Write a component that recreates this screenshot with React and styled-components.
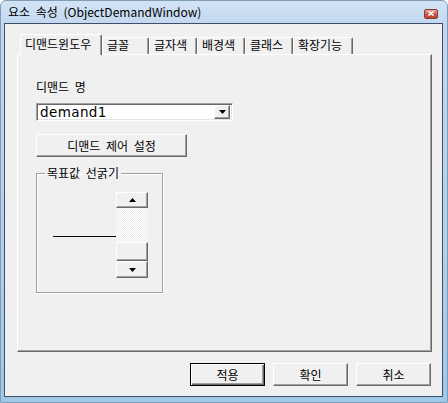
import React from "react";
import styled, { createGlobalStyle } from "styled-components";

const GlobalStyle = createGlobalStyle`
  html, body { margin: 0; padding: 0; }
  body {
    font-family: "Noto Sans CJK KR", "Noto Sans", sans-serif;
    font-size: 12px;
    word-spacing: 3px;
    color: #000;
  }
`;

const Window = styled.div`
  box-sizing: border-box;
  width: 448px;
  height: 403px;
  display: flex;
  flex-direction: column;
  padding: 0 4px 5px 3px;
  border: 1px solid #7f9db9;
  border-radius: 6px 6px 0 0;
  background: linear-gradient(to bottom, #d3e3f4 0, #c3d8ef 22px, #b5cfea 60%, #9fc8e8 100%);
`;

const TitleBar = styled.div`
  height: 22px;
  display: flex;
  align-items: center;
  padding-left: 4px;
`;

const Title = styled.span`
  flex: 1;
  line-height: 14px;
  color: #000;
`;

const CloseBox = styled.div`
  width: 14px;
  height: 10px;
  margin: 3px 5px 0 0;
  box-sizing: border-box;
  border: 1px solid #8a3a30;
  border-radius: 2px;
  background: linear-gradient(to bottom, #e8a79c, #c9594b 55%, #b8402f);
  display: flex;
  align-items: center;
  justify-content: center;
`;

const Client = styled.div`
  flex: 1;
  display: flex;
  flex-direction: column;
  background: #f0f0f0;
  border: 1px solid #3c4f66;
  padding: 10px 10px 10px 12px;
`;

const TabStrip = styled.div`
  height: 20px;
  display: flex;
  align-items: flex-end;
  padding-left: 3px;
`;

const Tab = styled.div`
  box-sizing: border-box;
  width: ${(p) => p.$w}px;
  height: ${(p) => (p.$active ? 21 : 17)}px;
  padding: ${(p) => (p.$active ? "2px 0 0 4px" : "0 0 0 4px")};
  line-height: 14px;
  white-space: nowrap;
  background: #f0f0f0;
  border-top: 1px solid #fff;
  border-left: 1px solid #fff;
  border-right: 1px solid #696969;
  border-radius: 2px 2px 0 0;
  box-shadow: inset -1px 0 #a0a0a0;
  position: ${(p) => (p.$active ? "relative" : "static")};
  z-index: ${(p) => (p.$active ? 1 : "auto")};
  margin-bottom: ${(p) => (p.$active ? "-1px" : "0")};
`;

const Panel = styled.div`
  box-sizing: border-box;
  height: 298px;
  flex: none;
  display: flex;
  flex-direction: column;
  align-items: flex-start;
  border: 1px solid;
  border-color: #fff #696969 #696969 #fff;
  box-shadow: inset -1px -1px #a0a0a0;
  padding: 25px 0 0 18px;
`;

const Label = styled.div`
  line-height: 14px;
`;

const Combo = styled.div`
  box-sizing: border-box;
  margin-top: 9px;
  width: 197px;
  height: 18px;
  display: flex;
  align-items: center;
  padding: 2px;
  background: #fff;
  border: 1px solid;
  border-color: #a0a0a0 #fff #fff #a0a0a0;
  box-shadow: inset 1px 1px #696969, inset -1px -1px #e3e3e3;
`;

const ComboText = styled.span`
  flex: 1;
  padding-left: 1px;
  font-family: "DejaVu Sans", "Liberation Sans", sans-serif;
  font-size: 13.5px;
  letter-spacing: 0.4px;
  line-height: 14px;
`;

const Raised = styled.div`
  box-sizing: border-box;
  background: #f0f0f0;
  border: 1px solid;
  border-color: #fff #696969 #696969 #fff;
  box-shadow: inset -1px -1px #a0a0a0;
  display: flex;
  align-items: center;
  justify-content: center;
`;

const DropButton = styled(Raised)`
  width: 16px;
  height: 14px;
`;

const Button = styled(Raised)`
  width: ${(p) => p.$w}px;
  height: 23px;
  line-height: 14px;
  ${(p) =>
    p.$default &&
    `
    border: 1px solid #000;
    box-shadow: inset 1px 1px #fff, inset -1px -1px #696969, inset -2px -2px #a0a0a0;
  `}
`;

const SetupButton = styled(Button)`
  margin-top: 13px;
`;

const Group = styled.fieldset`
  box-sizing: border-box;
  margin: 9px 0 0 0;
  width: 127px;
  min-width: 0;
  padding: 12px 0 14px 8px;
  border: 1px solid #a0a0a0;
  box-shadow: inset 1px 1px #fff, 1px 1px #fff;
`;

const Legend = styled.legend`
  padding: 0 2px;
  line-height: 14px;
`;

const Row = styled.div`
  display: flex;
  align-items: center;
  padding-left: 8px;
`;

const LineSample = styled.div`
  width: 63px;
  height: 1px;
  margin-top: 2px;
  background: #000;
`;

const ScrollBar = styled.div`
  width: 32px;
  display: flex;
  flex-direction: column;
`;

const ScrollButton = styled(Raised)`
  height: ${(p) => p.$h}px;
`;

const Track = styled.div`
  height: 34px;
  background: repeating-conic-gradient(#ffffff 0 25%, #ebebeb 0 50%) 0 0 / 2px 2px;
`;

const Footer = styled.div`
  margin-top: 11px;
  display: flex;
  justify-content: flex-end;
  gap: 8px;
  padding-right: 1px;
`;

const Arrow = ({ up }) => (
  <svg width="7" height="4" viewBox="0 0 7 4">
    <path d={up ? "M0 4 L3.5 0 L7 4 Z" : "M0 0 L7 0 L3.5 4 Z"} fill="#000" />
  </svg>
);

const tabs = [
  { label: "디맨드윈도우", w: 82, active: true },
  { label: "글꼴", w: 47 },
  { label: "글자색", w: 48 },
  { label: "배경색", w: 48 },
  { label: "클래스", w: 48 },
  { label: "확장기능", w: 60 },
];

export default function App() {
  return (
    <>
      <GlobalStyle />
      <Window>
        <TitleBar>
          <Title>요소 속성 (ObjectDemandWindow)</Title>
          <CloseBox>
            <svg width="6" height="5" viewBox="0 0 6 5">
              <path d="M0.5 0.5 L5.5 4.5 M5.5 0.5 L0.5 4.5" stroke="#fff" strokeWidth="1.6" />
            </svg>
          </CloseBox>
        </TitleBar>
        <Client>
          <TabStrip>
            {tabs.map((t) => (
              <Tab key={t.label} $w={t.w} $active={t.active}>
                {t.label}
              </Tab>
            ))}
          </TabStrip>
          <Panel>
            <Label>디맨드 명</Label>
            <Combo>
              <ComboText>demand1</ComboText>
              <DropButton>
                <Arrow />
              </DropButton>
            </Combo>
            <SetupButton $w={151}>디맨드 제어 설정</SetupButton>
            <Group>
              <Legend>목표값 선굵기</Legend>
              <Row>
                <LineSample />
                <ScrollBar>
                  <ScrollButton $h={16}>
                    <Arrow up />
                  </ScrollButton>
                  <Track />
                  <ScrollButton $h={19} />
                  <ScrollButton $h={17}>
                    <Arrow />
                  </ScrollButton>
                </ScrollBar>
              </Row>
            </Group>
          </Panel>
          <Footer>
            <Button $w={75} $default>적용</Button>
            <Button $w={75}>확인</Button>
            <Button $w={75}>취소</Button>
          </Footer>
        </Client>
      </Window>
    </>
  );
}
